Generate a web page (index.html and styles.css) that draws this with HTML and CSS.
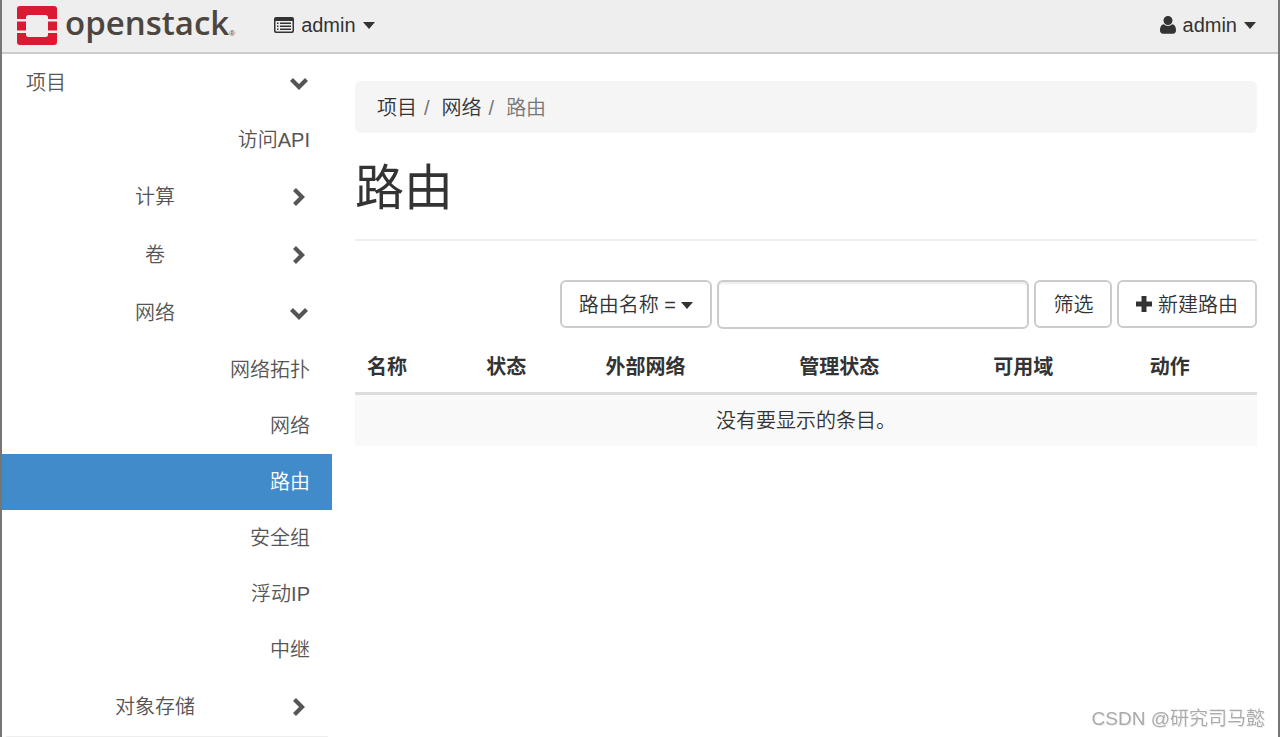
FILE: index.html
```html
<!DOCTYPE html>
<html lang="zh-CN">
<head>
<meta charset="utf-8">
<title>路由 - OpenStack Dashboard</title>
<link rel="stylesheet" href="styles.css">
</head>
<body>
<svg class="sprite" aria-hidden="true">
  <symbol id="right" viewBox="0 0 20 20"><path d="M4.500 2.500 12 10l-7.500 7.500" fill="none" stroke="currentColor" stroke-width="4.200"/></symbol>
  <symbol id="down" viewBox="0 0 20 20"><path d="M1.500 6.500l7.500 7.500 7.500-7.500" fill="none" stroke="currentColor" stroke-width="4.200"/></symbol>
  <symbol id="caret" viewBox="0 0 12 7"><path d="M0 0h12L6 7z" fill="currentColor"/></symbol>
</svg>
<header class="navbar">
  <a class="brand" href="#">
    <svg class="brand-mark" viewBox="0 0 40 40" aria-hidden="true">
      <path fill="#da1a32" d="M3 0h34a3 3 0 0 1 3 3v10h-9v-1.500A2.500 2.500 0 0 0 28.500 9h-17A2.500 2.500 0 0 0 9 11.500V13H0V3a3 3 0 0 1 3-3zM0 15.500h9v9H0zM31 15.500h9v9h-9zM0 27h9v1.500a2.500 2.500 0 0 0 2.500 2.500h17a2.500 2.500 0 0 0 2.500-2.500V27h9v9a3 3 0 0 1-3 3H3a3 3 0 0 1-3-3z"/>
    </svg>
    <span class="brand-name">openstack</span><span class="brand-reg">®</span>
  </a>
  <button class="nav-menu" type="button">
    <svg class="icon-list" viewBox="0 0 20 16" aria-hidden="true">
      <path fill="currentColor" fill-rule="evenodd" d="M2 0h16a2 2 0 0 1 2 2v12a2 2 0 0 1-2 2H2a2 2 0 0 1-2-2V2a2 2 0 0 1 2-2zM1.500 4v9.500a1 1 0 0 0 1 1h15a1 1 0 0 0 1-1V4zM3 5.500h1.500V7H3zM6 5.500h11V7H6zM3 8.500h1.500V10H3zM6 8.500h11V10H6zM3 11.500h1.500V13H3zM6 11.500h11V13H6z"/>
    </svg>
    <span>admin</span>
    <svg class="caret" aria-hidden="true"><use href="#caret"/></svg>
  </button>
  <button class="nav-menu nav-user" type="button">
    <svg class="icon-user" viewBox="0 0 16 18" aria-hidden="true">
      <path fill="currentColor" d="M8 0a4.500 4.500 0 0 1 0 9 4.500 4.500 0 0 1 0-9zM3.700 8.200a6 6 0 0 0 8.600 0C15 8.500 16 11.500 16 14.500c0 2-1.200 3.200-3 3.200H3c-1.800 0-3-1.200-3-3.200 0-3 1-6 3.700-6.300z"/>
    </svg>
    <span>admin</span>
    <svg class="caret" aria-hidden="true"><use href="#caret"/></svg>
  </button>
</header>
<div class="page">
  <nav class="sidebar">
    <a class="group root" href="#"><span>项目</span><svg class="chevron" aria-hidden="true"><use href="#down"/></svg></a>
    <a class="leaf" href="#">访问API</a>
    <a class="group" href="#"><span>计算</span><svg class="chevron" aria-hidden="true"><use href="#right"/></svg></a>
    <a class="group" href="#"><span>卷</span><svg class="chevron" aria-hidden="true"><use href="#right"/></svg></a>
    <a class="group" href="#"><span>网络</span><svg class="chevron" aria-hidden="true"><use href="#down"/></svg></a>
    <a class="leaf" href="#">网络拓扑</a>
    <a class="leaf" href="#">网络</a>
    <a class="leaf active" href="#" aria-current="page">路由</a>
    <a class="leaf" href="#">安全组</a>
    <a class="leaf" href="#">浮动IP</a>
    <a class="leaf" href="#">中继</a>
    <a class="group" href="#"><span>对象存储</span><svg class="chevron" aria-hidden="true"><use href="#right"/></svg></a>
    <hr class="sidebar-rule">
  </nav>
  <main class="content">
    <ol class="breadcrumb">
      <li><a href="#">项目</a></li>
      <li><a href="#">网络</a></li>
      <li>路由</li>
    </ol>
    <h1>路由</h1>
    <form class="actions">
      <button class="btn" type="button">路由名称 = <svg class="caret" aria-hidden="true"><use href="#caret"/></svg></button>
      <input class="search" type="text" aria-label="路由名称">
      <button class="btn" type="button">筛选</button>
      <button class="btn" type="button"><svg class="icon-plus" viewBox="0 0 16 16" aria-hidden="true"><path fill="currentColor" d="M5.500 0h5v5.500H16v5h-5.500V16h-5v-5.500H0v-5h5.500z"/></svg> 新建路由</button>
    </form>
    <table class="routers">
      <thead>
        <tr><th>名称</th><th>状态</th><th>外部网络</th><th>管理状态</th><th>可用域</th><th>动作</th></tr>
      </thead>
      <tbody>
        <tr><td colspan="6">没有要显示的条目。</td></tr>
      </tbody>
    </table>
  </main>
</div>
<div class="watermark">CSDN @研究司马懿</div>
</body>
</html>
```
FILE: styles.css
```css
* { box-sizing: border-box; }

body {
  margin: 0;
  min-height: 100vh;
  border: solid #767676;
  border-width: 0 2px;
  background: #fff;
  color: #333;
  font: 350 20px/28px "Liberation Sans", "Noto Sans CJK SC", sans-serif;
  overflow: hidden;
}

a { color: inherit; text-decoration: none; }

button, input { font: inherit; color: inherit; }

.sprite { position: absolute; width: 0; height: 0; }

.caret { width: 12px; height: 7px; flex: none; }

.navbar {
  display: flex;
  align-items: center;
  height: 54px;
  padding: 0 22px 0 15px;
  background: #eee;
  border-bottom: 2px solid #ccc;
}

.brand {
  display: flex;
  align-items: center;
  color: #4d4540;
}

.brand-mark { width: 40px; height: 40px; margin-right: 8px; }

.brand-name {
  font: 600 33px/40px "Open Sans", sans-serif;
  padding-bottom: 6px;
}

.brand-reg { font-size: 8px; line-height: 10px; padding-top: 16px; }

.nav-menu {
  display: flex;
  align-items: center;
  gap: 7px;
  margin-left: 39px;
  padding: 0 0 2px;
  border: 0;
  background: none;
}

.nav-user { margin-left: auto; }

.icon-list { width: 20px; height: 16px; }

.icon-user { width: 16px; height: 18px; }

.page { display: flex; }

.sidebar {
  flex: none;
  width: 330px;
  color: #555;
}

.group {
  display: flex;
  align-items: center;
  gap: 6px;
  padding: 15px 22px 15px 24px;
}

.group span { flex: 1; text-align: center; }

.root span { text-align: left; }

.chevron { width: 20px; height: 20px; }

.leaf {
  display: block;
  padding: 14px 22px;
  text-align: right;
}

.active { background: #428bca; color: #fff; }

.sidebar-rule {
  margin: 0 4px;
  border: 0;
  border-top: 1px solid #eee;
}

.content { flex: 1; padding: 27px 21px 0 23px; }

.breadcrumb {
  display: flex;
  margin: 0;
  padding: 13px 22px 11px;
  border-radius: 6px;
  background: #f5f5f5;
  color: #777;
  list-style: none;
}

.breadcrumb a { color: #333; }

.breadcrumb li + li::before { content: "/"; padding: 0 12px 0 7px; }

h1 {
  margin: 28px 0 39px;
  padding-bottom: 24px;
  border-bottom: 2px solid #eee;
  font-size: 49px;
  font-weight: 400;
  line-height: 54px;
}

.actions {
  display: flex;
  justify-content: flex-end;
  gap: 5px;
}

.btn {
  height: 48px;
  padding: 1px 17px 0;
  border: 2px solid #ccc;
  border-radius: 6px;
  background: #fff;
  white-space: nowrap;
}

.btn .caret { vertical-align: 3px; }

.icon-plus { width: 16px; height: 16px; }

.search {
  width: 312px;
  height: 49px;
  padding: 0 16px;
  border: 2px solid #ccc;
  border-radius: 6px;
  background: #fff;
  box-shadow: inset 0 2px 2px rgba(0, 0, 0, 0.08);
}

.routers {
  width: 100%;
  margin-top: 11px;
  border-collapse: collapse;
}

.routers th {
  padding: 13px 12px 11px;
  border-bottom: 3px solid #ddd;
  font-weight: 700;
  text-align: left;
}

.routers td {
  padding: 12px 12px 11px;
  background: #f9f9f9;
  text-align: center;
}

.watermark {
  position: fixed;
  right: 15px;
  bottom: 4px;
  color: #aaa;
  font-size: 19px;
  text-shadow: 1px 1px 0 #eee;
}
```
